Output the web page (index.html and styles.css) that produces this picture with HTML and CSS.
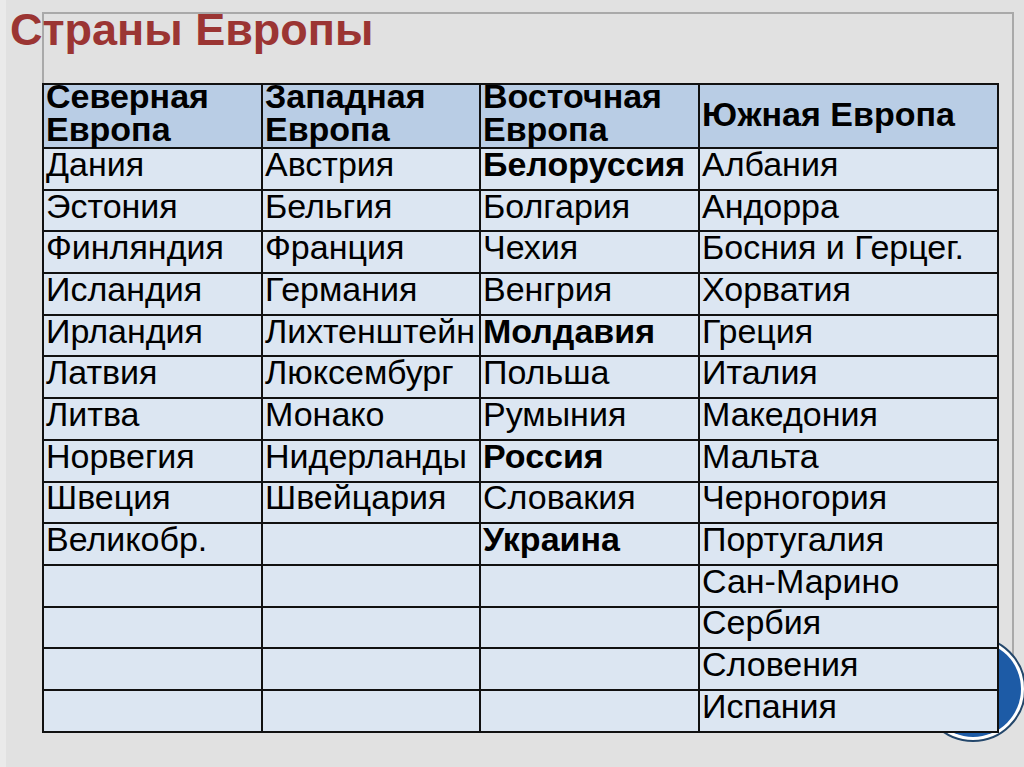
FILE: index.html
```html
<!DOCTYPE html>
<html lang="ru">
<head>
<meta charset="utf-8">
<title>Страны Европы</title>
<link rel="stylesheet" href="styles.css">
</head>
<body>
<div class="slide">
  <div class="frame"></div>
  <svg class="badge" width="108" height="108" viewBox="0 0 108 108">
    <circle cx="54" cy="54" r="52" fill="#ffffff" stroke="#24476b" stroke-width="2"/>
    <circle cx="54" cy="54" r="48" fill="#1d5ba6"/>
  </svg>
  <h1 class="title">Страны Европы</h1>
  <table class="countries">
    <colgroup>
      <col class="c1"><col class="c2"><col class="c3"><col class="c4">
    </colgroup>
    <thead>
      <tr class="head">
        <th><div class="hd two">Северная<br>Европа</div></th>
        <th><div class="hd two">Западная<br>Европа</div></th>
        <th><div class="hd two">Восточная<br>Европа</div></th>
        <th><div class="hd one">Южная Европа</div></th>
      </tr>
    </thead>
    <tbody>
      <tr><td>Дания</td><td>Австрия</td><td class="b">Белоруссия</td><td>Албания</td></tr>
      <tr><td>Эстония</td><td>Бельгия</td><td>Болгария</td><td>Андорра</td></tr>
      <tr><td>Финляндия</td><td>Франция</td><td>Чехия</td><td>Босния и Герцег.</td></tr>
      <tr><td>Исландия</td><td>Германия</td><td>Венгрия</td><td>Хорватия</td></tr>
      <tr><td>Ирландия</td><td>Лихтенштейн</td><td class="b">Молдавия</td><td>Греция</td></tr>
      <tr><td>Латвия</td><td>Люксембург</td><td>Польша</td><td>Италия</td></tr>
      <tr><td>Литва</td><td>Монако</td><td>Румыния</td><td>Македония</td></tr>
      <tr><td>Норвегия</td><td>Нидерланды</td><td class="b">Россия</td><td>Мальта</td></tr>
      <tr><td>Швеция</td><td>Швейцария</td><td>Словакия</td><td>Черногория</td></tr>
      <tr><td>Великобр.</td><td></td><td class="b">Украина</td><td>Португалия</td></tr>
      <tr><td></td><td></td><td></td><td>Сан-Марино</td></tr>
      <tr><td></td><td></td><td></td><td>Сербия</td></tr>
      <tr><td></td><td></td><td></td><td>Словения</td></tr>
      <tr><td></td><td></td><td></td><td>Испания</td></tr>
    </tbody>
  </table>
</div>
</body>
</html>
```

FILE: styles.css
```css
html, body {
  margin: 0;
  padding: 0;
  width: 1024px;
  height: 767px;
  overflow: hidden;
  background: #e1e1e1;
}

.slide {
  position: relative;
  z-index: 0;
  width: 1024px;
  height: 767px;
  box-sizing: border-box;
  border-left: 6px solid #eaeaea;
  font-family: "Liberation Sans", Arial, sans-serif;
}

.frame {
  position: absolute;
  z-index: -1;
  left: 36px;
  top: 12px;
  width: 968px;
  height: 704px;
  border: 2px solid #a9a9a9;
}

.badge {
  position: absolute;
  z-index: -1;
  left: 913px;
  top: 635px;
}

.title {
  margin: 0;
  padding: 4px 0 0 4px;
  font-size: 45px;
  line-height: 52px;
  font-weight: bold;
  color: #9b3533;
}

.countries {
  margin: 27px 0 0 36px;
  border-collapse: collapse;
  table-layout: fixed;
  width: 957px;
  border: 2px solid #111111;
}

.c1 { width: 219px; }
.c2 { width: 218px; }
.c3 { width: 219px; }
.c4 { width: 299px; }

.countries th,
.countries td {
  border: 2px solid #111111;
  padding: 0 0 0 2px;
  text-align: left;
  vertical-align: middle;
  white-space: nowrap;
  color: #000;
  font-size: 34px;
  overflow: visible;
}

.countries th {
  background: #b9cde5;
  font-weight: bold;
}

.hd {
  line-height: 33px;
}

.hd.two {
  margin: -7px 0 -1px;
}

.hd.one {
  margin: -3px 0 0;
}

.countries td {
  background: #dce6f2;
  font-weight: normal;
  line-height: 29px;
  padding-bottom: 9px;
}

.countries td.b {
  font-weight: bold;
}

.head {
  height: 64px;
}

.countries tbody tr {
  height: 41.7px;
}
```
